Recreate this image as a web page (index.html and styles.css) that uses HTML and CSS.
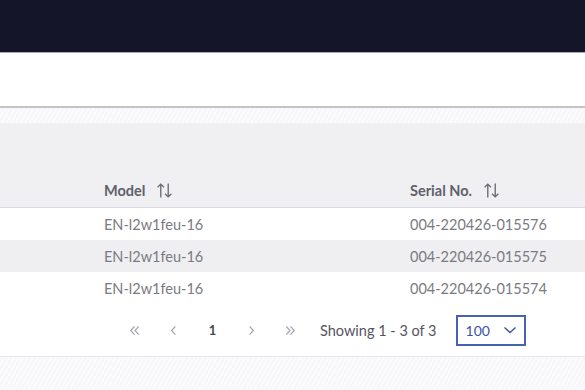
FILE: index.html
```html
<!DOCTYPE html>
<html lang="en">
<head>
  <meta charset="UTF-8" />
  <title>Devices</title>
  <link rel="stylesheet" href="styles.css">
</head>
<body>
  <div class="topbar"></div>
  <div class="toolbar"></div>

  <div class="content">
    <div class="table-card">
      <div class="table-head">
        <div class="row head-row">
          <div class="cell col-model">Model <svg class="sort" viewBox="0 0 16 16"><path d="M4.5 14.5V2M1.5 5l3-3 3 3M11.5 1.5V14M8.5 11l3 3 3-3"/></svg></div>
          <div class="cell col-serial">Serial No. <svg class="sort" viewBox="0 0 16 16"><path d="M4.5 14.5V2M1.5 5l3-3 3 3M11.5 1.5V14M8.5 11l3 3 3-3"/></svg></div>
        </div>
      </div>
      <div class="row">
        <div class="cell col-model">EN-l2w1feu-16</div>
        <div class="cell col-serial">004-220426-015576</div>
      </div>
      <div class="row alt">
        <div class="cell col-model">EN-l2w1feu-16</div>
        <div class="cell col-serial">004-220426-015575</div>
      </div>
      <div class="row">
        <div class="cell col-model">EN-l2w1feu-16</div>
        <div class="cell col-serial">004-220426-015574</div>
      </div>

      <div class="pager">
        <button class="pg-btn"><svg viewBox="0 0 16 16"><path d="M8 3.5L4 8l4 4.5M12.5 3.5L8.5 8l4 4.5"/></svg></button>
        <button class="pg-btn"><svg viewBox="0 0 16 16"><path d="M10 3.5L6 8l4 4.5"/></svg></button>
        <button class="pg-btn current">1</button>
        <button class="pg-btn"><svg viewBox="0 0 16 16"><path d="M6 3.5l4 4.5-4 4.5"/></svg></button>
        <button class="pg-btn"><svg viewBox="0 0 16 16"><path d="M3.5 3.5l4 4.5-4 4.5M8 3.5l4 4.5-4 4.5"/></svg></button>
        <span class="pg-info">Showing 1 - 3 of 3</span>
        <div class="pg-size">100 <svg viewBox="0 0 16 16"><path d="M2.5 5.5L8 10.5l5.5-5"/></svg></div>
      </div>
    </div>
  </div>
</body>
</html>
```

FILE: styles.css
```css
* {
  box-sizing: border-box;
}

body {
  margin: 0;
  font-family: Lato, "Open Sans", sans-serif;
  background: repeating-linear-gradient(120deg, #f7f7f9 0 2px, #fbfbfc 2px 4px);
  height: 390px;
  overflow: hidden;
}

.topbar {
  height: 53px;
  background: #141528;
  border-bottom: 1px solid #a9a9b4;
}

.toolbar {
  height: 55px;
  background: #fff;
  border-bottom: 2px solid #c3c3cb;
}

.content {
  padding-top: 15px;
}

.table-card {
  background: #fff;
}

.table-head {
  background: #f0f0f2;
  height: 85px;
  display: flex;
  align-items: flex-end;
  border-bottom: 1px solid #d9d9e0;
}

.row {
  display: flex;
  height: 32px;
  align-items: center;
  padding-left: 104px;
  font-size: 14.5px;
  color: #7a7a82;
}

.row.alt {
  background: #efeff1;
}

.head-row {
  width: 100%;
  height: 33px;
  font-weight: 700;
  color: #60606a;
}

.cell {
  display: flex;
  align-items: center;
}

.col-model {
  width: 306px;
}

.sort {
  width: 17px;
  height: 17px;
  margin-left: 11px;
  fill: none;
  stroke: #6c6c76;
  stroke-width: 1.3;
}

.pager {
  display: flex;
  align-items: center;
  height: 53px;
  padding-left: 115px;
  border-bottom: 1px solid #e6e6ec;
}

.pg-btn {
  width: 39px;
  height: 30px;
  padding: 0;
  border: none;
  background: none;
  display: flex;
  align-items: center;
  justify-content: center;
  font-family: inherit;
  font-size: 13px;
  font-weight: 700;
  color: #4a4a54;
}

.pg-btn svg {
  width: 15px;
  height: 15px;
  fill: none;
  stroke: #a4a4ae;
  stroke-width: 1.3;
}

.pg-info {
  margin-left: 10px;
  font-size: 14.5px;
  color: #55555e;
}

.pg-size {
  margin-left: 19px;
  width: 70px;
  height: 31px;
  border: 2px solid #4761b3;
  display: flex;
  align-items: center;
  padding-left: 8px;
  gap: 12px;
  font-size: 14px;
  color: #3d53a3;
}

.pg-size svg {
  width: 16px;
  height: 16px;
  fill: none;
  stroke: #3d53a3;
  stroke-width: 1.4;
}
```
